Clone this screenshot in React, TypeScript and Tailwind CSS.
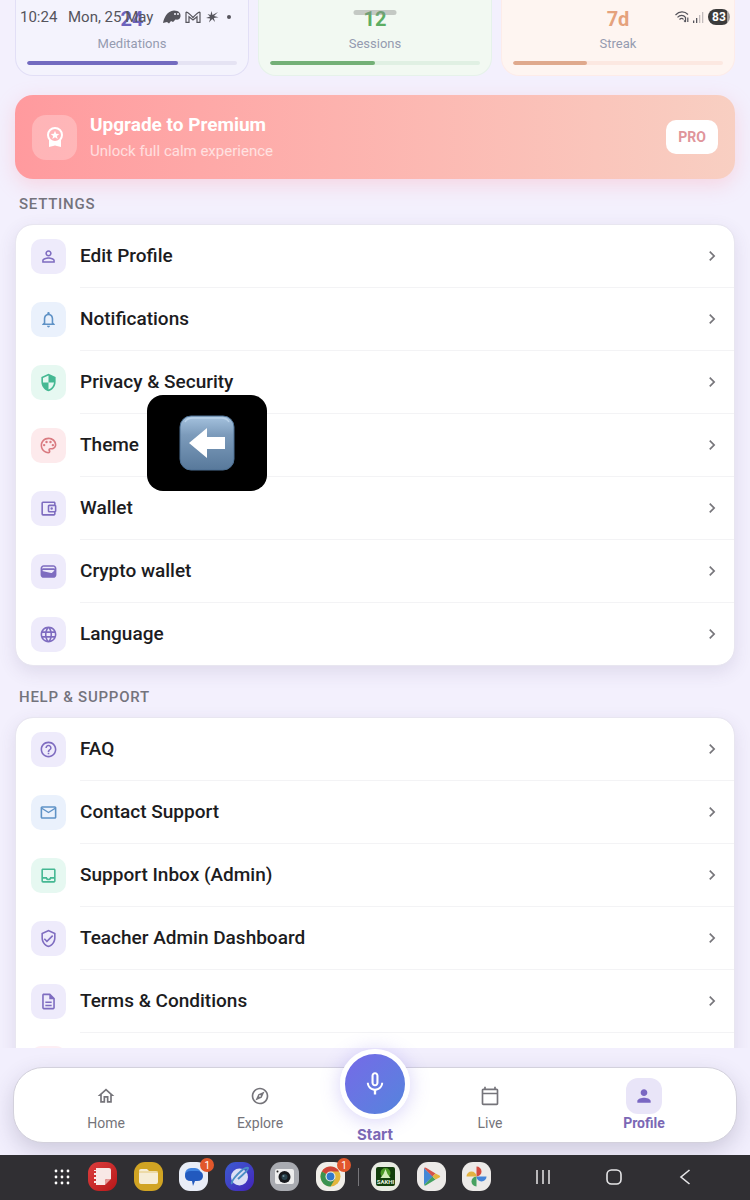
import type { ReactNode } from "react";
import type { IconType } from "react-icons";
import {
  MdChevronRight,
  MdHelpOutline,
  MdLanguage,
  MdMailOutline,
  MdMicNone,
  MdNotificationsNone,
  MdOutlineAccountBalanceWallet,
  MdOutlineCalendarToday,
  MdOutlineDescription,
  MdOutlineExplore,
  MdOutlineHome,
  MdOutlineInbox,
  MdOutlinePalette,
  MdOutlineVerifiedUser,
  MdPerson,
  MdPersonOutline,
  MdSecurity,
  MdWallet,
} from "react-icons/md";

type Row = { label: string; icon: IconType; tile: string };

const violet = "bg-[#eeebfb] text-[#7e6cc0]";
const blue = "bg-[#eaf1fc] text-[#5f92c6]";
const green = "bg-[#e6f8f1] text-[#45b893]";
const red = "bg-[#fdeaec] text-[#d97a80]";

const settings: Row[] = [
  { label: "Edit Profile", icon: MdPersonOutline, tile: violet },
  { label: "Notifications", icon: MdNotificationsNone, tile: blue },
  { label: "Privacy & Security", icon: MdSecurity, tile: green },
  { label: "Theme", icon: MdOutlinePalette, tile: red },
  { label: "Wallet", icon: MdOutlineAccountBalanceWallet, tile: violet },
  { label: "Crypto wallet", icon: MdWallet, tile: violet },
  { label: "Language", icon: MdLanguage, tile: violet },
];

const support: Row[] = [
  { label: "FAQ", icon: MdHelpOutline, tile: violet },
  { label: "Contact Support", icon: MdMailOutline, tile: blue },
  { label: "Support Inbox (Admin)", icon: MdOutlineInbox, tile: green },
  { label: "Teacher Admin Dashboard", icon: MdOutlineVerifiedUser, tile: violet },
  { label: "Terms & Conditions", icon: MdOutlineDescription, tile: violet },
];

const stats = [
  { value: "24", label: "Meditations", percent: 72, card: "bg-[#f4f3fd] border-[#e2dff6]", text: "text-[#6c63bd]", bar: "bg-[#736bc0]", track: "bg-[#e5e3f3]" },
  { value: "12", label: "Sessions", percent: 50, card: "bg-[#f2f9f2] border-[#e6f2ea]", text: "text-[#5dae63]", bar: "bg-[#74b077]", track: "bg-[#e0f0e3]" },
  { value: "7d", label: "Streak", percent: 35, card: "bg-[#fef5f1] border-[#fdece9]", text: "text-[#e5a27c]", bar: "bg-[#dfa98d]", track: "bg-[#fce8e1]" },
];

function StatusBar() {
  return (
    <div className="absolute inset-x-0 top-0 z-20 flex h-8 items-center justify-between px-5 pt-0.5 text-[#55545c]">
      <div className="flex items-center text-[15px]">
        <span className="w-12">10:24</span>
        <span className="mr-2.5">Mon, 25 May</span>
        <svg viewBox="0 0 18 14" className="mr-1 h-3.5 w-[18px]">
          <path d="M0 13C1 8 4 1 11 .5c5 0 7 3 6.500 6-.5 3-3 3.500-5 3L10 12l-2-1-2 2.500-2-1.500z" fill="currentColor" />
          <circle cx="12" cy="4" r="1" fill="#f4f3fd" />
          <circle cx="15" cy="4" r="1" fill="#f4f3fd" />
        </svg>
        <svg viewBox="0 0 16 12" className="mr-1 h-3 w-4" fill="none" stroke="currentColor" strokeWidth="1.200">
          <path d="M1 11.300V1.500C2-.2 8 6.500 8 6.500S14-.2 15 1.500v9.800h-3V5.800L8 9 4 5.800v5.500z" />
        </svg>
        <svg viewBox="0 0 14 14" className="mr-2 size-3.5" fill="currentColor">
          <path d="M6.500 1l1 4L13 2 9 6l4.500 1.200-4.700.8L10 12 7.200 9 4 12.500l1.200-4L1 8l4-1.500L2.500 4l3 1z" />
        </svg>
        <span className="size-1 rounded-full bg-current" />
      </div>
      <div className="flex items-center gap-1">
        <svg viewBox="0 0 14 12" className="h-3 w-3.5" fill="none" stroke="currentColor" strokeWidth="1.200">
          <path d="M.5 4c4-4 9-4 12.500-.5M2.500 6.300c2.500-2.600 6-2.600 8 0M4.500 8.500c1.500-1.600 3-1.600 4 0" />
          <path d="M10.500 6v5M9 9.500l1.500 1.500M12.800 11V6.500" />
        </svg>
        <svg viewBox="0 0 11 11" className="size-[11px]" fill="currentColor">
          <path d="M0 8.500h1.300V11H0zM3 6h1.300v5H3z" />
          <path d="M6 3h1.300v8H6zM9 0h1.300v11H9z" opacity=".35" />
        </svg>
        <span className="flex h-4 w-[22px] items-center justify-center rounded-full bg-linear-to-r from-[#3c3b3b] from-85% to-[#a3a09f] to-85% text-xs font-bold text-white">
          83
        </span>
      </div>
    </div>
  );
}

function PremiumBadge() {
  return (
    <svg viewBox="0 0 18 22" className="h-[22px] w-[18px]">
      <path d="M3 13v8l6-1.500 6 1.500v-8z" fill="#fff" />
      <circle cx="9" cy="9" r="7" fill="#ffb4b8" stroke="#fff" strokeWidth="2" />
      <path d="M9 4.800l1.200 2.900 3.100.2-2.400 2 .8 3L9 11.300l-2.700 1.600.8-3-2.400-2 3.100-.2z" fill="#fff" />
    </svg>
  );
}

function ThemePointer() {
  return (
    <span className="absolute left-[131px] top-[calc(50%-3px)] z-10 flex h-24 w-[120px] -translate-y-1/2 items-center justify-center rounded-2xl bg-black">
      <svg viewBox="0 0 56 56" className="size-14">
        <defs>
          <linearGradient id="key" x1="0" y1="0" x2="0" y2="1">
            <stop offset="0" stopColor="#a6c3df" />
            <stop offset=".35" stopColor="#7c9bbb" />
            <stop offset="1" stopColor="#58799b" />
          </linearGradient>
        </defs>
        <rect x="1" y="1" width="54" height="54" rx="11" fill="url(#key)" stroke="#4c6f92" strokeWidth="1" />
        <path d="M6 7Q8 3 14 3h28q6 0 8 4" fill="none" stroke="#b9d2ea" strokeWidth="1.500" />
        <path d="M10 28L28 13v9h18v12H28v9z" fill="#fff" />
      </svg>
    </span>
  );
}

function SettingsRow({ row, divider, children }: { row: Row; divider: boolean; children?: ReactNode }) {
  const Icon = row.icon;
  return (
    <li className="relative">
      <button type="button" className="flex h-[62px] w-full items-center gap-3.5 pl-[15px] pr-3 text-left">
        <span className={`flex size-[35px] items-center justify-center rounded-[10px] ${row.tile}`}>
          <Icon size={19} />
        </span>
        <span className="flex-1 text-[19px] font-medium text-[#1c1c1e]">{row.label}</span>
        <MdChevronRight size={20} className="text-[#77767b]" />
      </button>
      {divider && <div className="ml-16 h-px bg-[#f3f3f5]" />}
      {children}
    </li>
  );
}

function SectionTitle({ children }: { children: ReactNode }) {
  return <h2 className="px-1 text-[15px] leading-5 font-medium tracking-wider text-[#74737c]">{children}</h2>;
}

const cardClass = "rounded-[18px] border border-[#e8e6f0] bg-white bg-clip-padding shadow-[0_6px_18px_rgba(70,60,110,0.12)]";

function NavItem({ icon: Icon, label, active }: { icon: IconType; label: string; active?: boolean }) {
  return (
    <a href="#" className={`flex flex-1 flex-col items-center ${active ? "font-bold text-[#7b68b5]" : "text-[#75747a]"}`}>
      <span className={`flex size-9 items-center justify-center rounded-xl ${active ? "bg-[#e9e5f8] text-[#7a67c2]" : ""}`}>
        <Icon size={20} />
      </span>
      <span className="text-sm leading-[18px]">{label}</span>
    </a>
  );
}

function BottomNav() {
  return (
    <nav className="relative z-10 bg-[#f2effd] px-[13px] pt-[19px] pb-3">
      <div className="flex h-[76px] rounded-[30px] border border-[#d3d1dc] bg-white px-[15px] pt-2.5 shadow-[0_8px_22px_rgba(60,55,90,0.20)]">
        <NavItem icon={MdOutlineHome} label="Home" />
        <NavItem icon={MdOutlineExplore} label="Explore" />
        <a href="#" className="-mt-[29px] flex w-[76px] flex-col items-center text-[15px] font-bold text-[#7b68b5]">
          <span className="flex size-[70px] shrink-0 items-center justify-center rounded-full border-5 border-white bg-linear-to-br from-[#7767e8] to-[#4f86dc] bg-origin-border text-white shadow-[0_2px_20px_rgba(110,95,230,0.28)]">
            <MdMicNone size={28} />
          </span>
          <span className="mt-1.5 font-['Inter'] leading-5">Start</span>
        </a>
        <NavItem icon={MdOutlineCalendarToday} label="Live" />
        <NavItem icon={MdPerson} label="Profile" active />
      </div>
    </nav>
  );
}

function AppIcon({ bg, label, badge, children }: { bg: string; label: string; badge?: string; children: ReactNode }) {
  return (
    <button type="button" aria-label={label} className={`relative size-[29px] rounded-[11px] ${bg}`}>
      <svg viewBox="0 0 29 29" className="size-full">{children}</svg>
      {badge && (
        <span className="absolute -right-1.5 -top-1 flex size-3.5 items-center justify-center rounded-full bg-[#e2572b] text-[10px] text-white">
          {badge}
        </span>
      )}
    </button>
  );
}

function Taskbar() {
  return (
    <footer className="relative z-20 flex h-[45px] items-center bg-[#302f33] pb-0.5 pl-[54px] pr-[57px]">
      <button type="button" aria-label="Apps" className="mr-[18px]">
        <svg viewBox="0 0 16 16" className="size-4" fill="#fff">
          {[2, 8, 14].map((y) => [2, 8, 14].map((x) => <circle key={`${x}-${y}`} cx={x} cy={y} r="1.400" />))}
        </svg>
      </button>
      <div className="flex w-[257px] justify-between">
        <AppIcon label="Notes" bg="bg-linear-to-br from-[#dc3d3d] to-[#b81518]">
          <path d="M8 6h13q2 0 2 2v9h-4q-2 0-2 2v4H8v-2H6v-2h2v-2H6v-2h2v-2H6v-2h2v-2H6V8h2z" fill="#f8e8e6" />
          <path d="M23 17l-6 6v-4q0-2 2-2z" fill="#e59a97" />
        </AppIcon>
        <AppIcon label="Files" bg="bg-[#d1a423]">
          <path d="M5 9q0-2 2-2h6l2 2h7q2 0 2 2v9q0 2-2 2H7q-2 0-2-2z" fill="#f6edd6" />
          <path d="M5 10h19" stroke="#e4c878" />
        </AppIcon>
        <AppIcon label="Messages" bg="bg-[#e9edf7]" badge="1">
          <rect x="6" y="6" width="16" height="12" rx="6" fill="#3f82e0" />
          <path d="M12 9h6q6 0 6 5t-6 5h-2l-2 5-1-5h-1q-6 0-6-5t6-5z" fill="#2259be" />
        </AppIcon>
        <AppIcon label="Internet" bg="bg-linear-to-br from-[#3b5bd2] to-[#4220b8]">
          <circle cx="14.500" cy="15" r="8.500" fill="#dcdff5" />
          <path d="M7 22C5 19 19 4 23 6c1 2-6 7-10 11" fill="none" stroke="#4c8fc5" strokeWidth="2" />
        </AppIcon>
        <AppIcon label="Camera" bg="bg-[#a9abb1]">
          <rect x="5" y="7" width="19" height="15" rx="2" fill="#eeeeee" />
          <circle cx="14.500" cy="15" r="6" fill="#17191d" />
          <circle cx="14.500" cy="15" r="3" fill="#29434d" />
          <circle cx="13.500" cy="14" r="1" fill="#78919c" />
          <circle cx="7.500" cy="9.500" r="1" fill="#222" />
        </AppIcon>
        <AppIcon label="Chrome" bg="bg-[#f0eee9]" badge="1">
          <circle cx="14.500" cy="14.500" r="10" fill="#e3b63c" />
          <path d="M14.500 14.500L5.840 9.500A10 10 0 0 1 23.160 9.500H14.500z" fill="#cf4438" />
          <path d="M14.500 14.500L5.840 9.500A10 10 0 0 0 14.500 24.500L19 17z" fill="#3b9250" />
          <circle cx="14.500" cy="14.500" r="5" fill="#f0eee9" />
          <circle cx="14.500" cy="14.500" r="3.900" fill="#3278cc" />
        </AppIcon>
      </div>
      <span className="ml-[13px] mr-3 h-[18px] w-px bg-[#77767a]" />
      <div className="flex w-[120px] justify-between">
        <AppIcon label="Sakhi" bg="bg-[#e8ebe2]">
          <rect x="5" y="5" width="19" height="19" rx="2" fill="#123e0b" />
          <circle cx="14.500" cy="11" r="5" fill="#4c9a28" />
          <path d="M14.500 7l2 5 3 4h-10l3-4z" fill="#d3efba" />
          <text x="14.500" y="21.500" textAnchor="middle" fontSize="6" fontWeight="700" fill="#e8f3e0">SAKHI</text>
        </AppIcon>
        <AppIcon label="Play Store" bg="bg-[#eceae8]">
          <path d="M7 6l9 8.500L7 23z" fill="#4488d6" />
          <path d="M7 6q1-1 2.500 0l9 5.500-3 3z" fill="#d6544a" />
          <path d="M7 23q1 1 2.500 0l9-5.500-3-3z" fill="#45a161" />
          <path d="M18.500 11.500l4 2q1.500 1 0 2l-4 2-3-3z" fill="#e5b43c" />
        </AppIcon>
        <AppIcon label="Photos" bg="bg-[#eceae8]">
          <path d="M14.500 14.500V4.500a5 5 0 0 1 0 10z" fill="#d44b3f" />
          <path d="M14.500 14.500h10a5 5 0 0 1-10 0z" fill="#4384d8" />
          <path d="M14.500 14.500v10a5 5 0 0 1 0-10z" fill="#47a160" />
          <path d="M14.500 14.500h-10a5 5 0 0 1 10 0z" fill="#e3b340" />
        </AppIcon>
      </div>
      <div className="ml-11 flex flex-1 items-center justify-between text-[#e6e6e8]">
        <button type="button" aria-label="Recents">
          <svg viewBox="0 0 16 16" className="size-4" stroke="currentColor" strokeWidth="1.500">
            <path d="M2 1v14M8 1v14M14 1v14" />
          </svg>
        </button>
        <button type="button" aria-label="Home screen">
          <svg viewBox="0 0 16 16" className="size-4" fill="none" stroke="currentColor" strokeWidth="1.600">
            <rect x="1" y="1" width="14" height="14" rx="4.500" />
          </svg>
        </button>
        <button type="button" aria-label="Back">
          <svg viewBox="0 0 16 16" className="size-4" fill="none" stroke="currentColor" strokeWidth="1.600">
            <path d="M12.500 1L4 8l8.500 7" />
          </svg>
        </button>
      </div>
    </footer>
  );
}

export default function App() {
  return (
    <div className="relative flex h-screen flex-col overflow-hidden bg-[#f3f0fd] font-[family-name:Roboto,sans-serif]">
      <StatusBar />
      <main className="min-h-0 flex-1 overflow-hidden px-[15px]">
        <section className="relative grid grid-cols-3 gap-[9px]">
          {stats.map((s) => (
            <div key={s.label} className={`flex h-[76px] flex-col items-center rounded-b-[18px] border border-t-0 px-[11px] pt-[7px] ${s.card}`}>
              <span className={`text-xl leading-6 font-bold ${s.text}`}>{s.value}</span>
              <span className="mt-1 text-[13px] leading-[18px] text-[#959bb0]">{s.label}</span>
              <div className={`mt-2 h-1 w-full overflow-hidden rounded-full ${s.track}`}>
                <div className={`h-full rounded-full ${s.bar}`} style={{ width: `${s.percent}%` }} />
              </div>
            </div>
          ))}
          {/* drag handle of the sheet */}
          <span className="absolute left-1/2 top-2.5 h-[5px] w-[43px] -translate-x-1/2 rounded-full bg-[#8b8f8b]/45" />
        </section>

        <section className="mt-[19px] flex h-[84px] items-center gap-[13px] rounded-[18px] bg-linear-to-r from-[#ff9a9e] to-[#f8cfc2] px-[17px] shadow-[0_6px_20px_rgba(255,154,170,0.32)]">
          <span className="flex size-[45px] items-center justify-center rounded-[14px] bg-white/25">
            <PremiumBadge />
          </span>
          <div className="flex-1 pt-0.5">
            <h1 className="text-[19px] leading-6 font-bold text-white">Upgrade to Premium</h1>
            <p className="mt-0.5 text-[15px] leading-6 text-white/65">Unlock full calm experience</p>
          </div>
          <button type="button" className="h-[34px] w-[52px] rounded-[10px] bg-white text-sm font-bold text-[#e0959b]">
            PRO
          </button>
        </section>

        <section className="mt-[15px]">
          <SectionTitle>SETTINGS</SectionTitle>
          <ul className={`mt-[10px] ${cardClass}`}>
            {settings.map((row, i) => (
              <SettingsRow key={row.label} row={row} divider={i < settings.length - 1}>
                {row.label === "Theme" && <ThemePointer />}
              </SettingsRow>
            ))}
          </ul>
        </section>

        <section className="mt-[21px]">
          <SectionTitle>HELP & SUPPORT</SectionTitle>
          <ul className={`mt-[10px] ${cardClass}`}>
            {support.map((row) => (
              <SettingsRow key={row.label} row={row} divider />
            ))}
            <li className="h-[62px] pl-[15px] pt-[13px]">
              <span className="block size-[35px] rounded-[10px] bg-[#fdeef4]" />
            </li>
          </ul>
        </section>
      </main>
      <BottomNav />
      <Taskbar />
    </div>
  );
}
